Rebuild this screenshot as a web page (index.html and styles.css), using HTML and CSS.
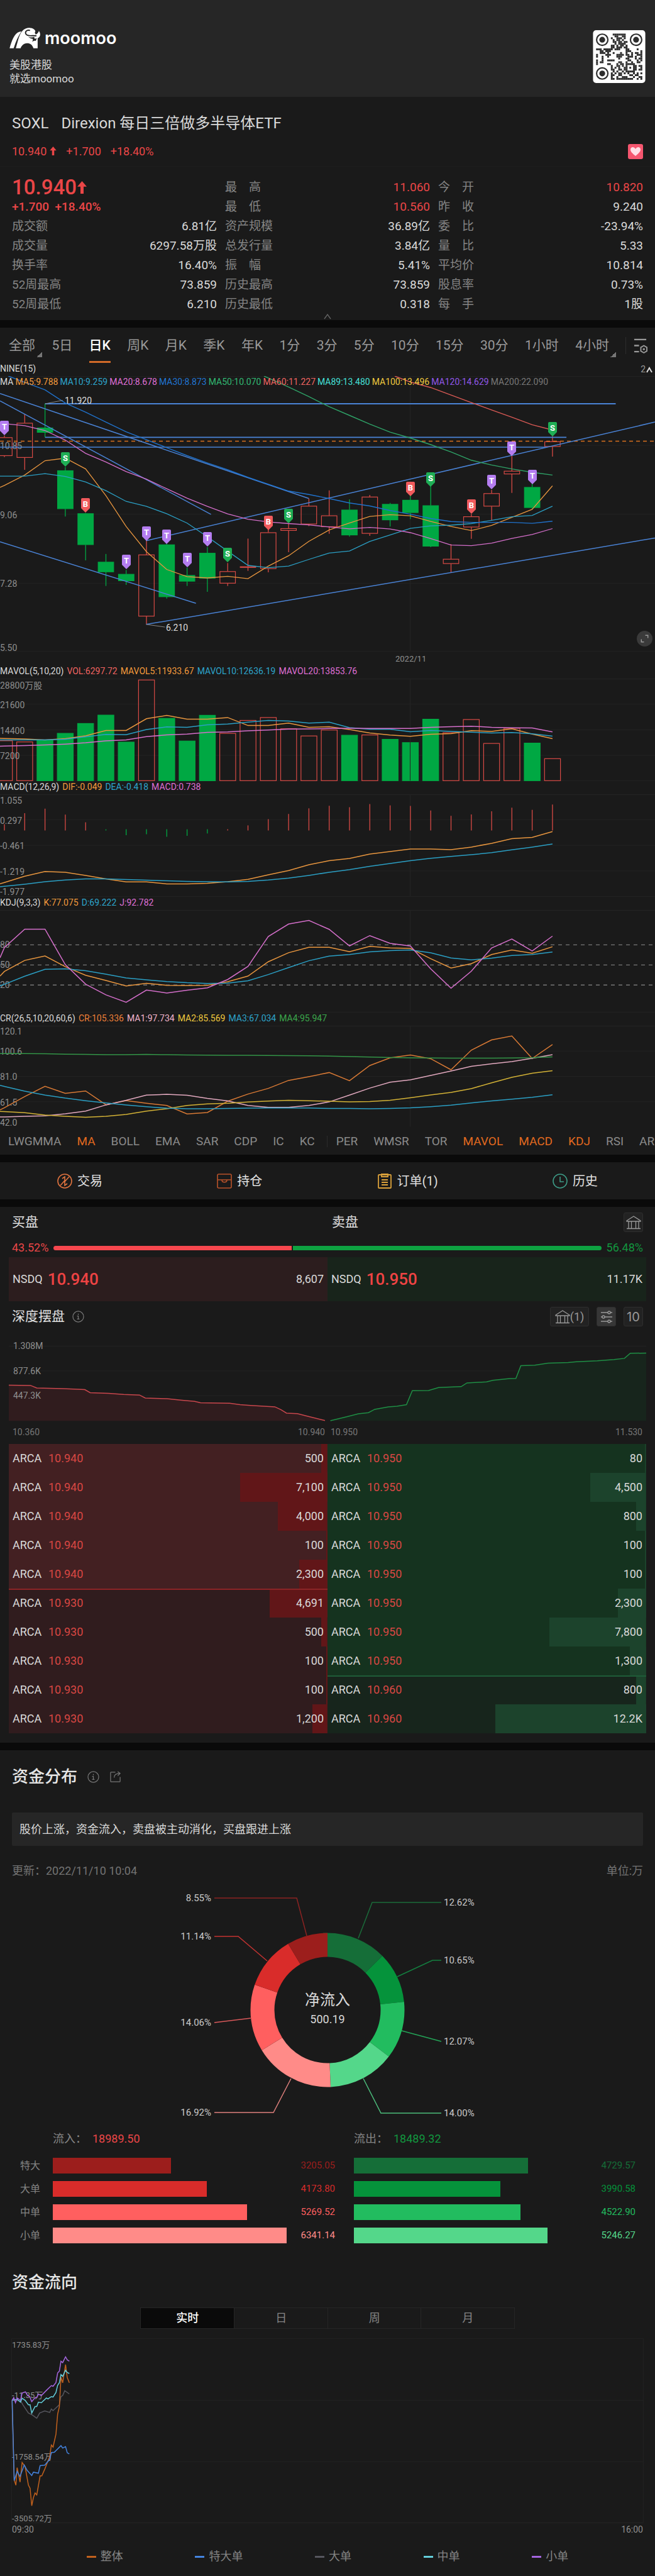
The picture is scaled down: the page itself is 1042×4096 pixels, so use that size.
FILE: index.html
```html
<!DOCTYPE html>
<html lang="zh-CN">
<head>
<meta charset="utf-8">
<meta name="viewport" content="width=device-width, initial-scale=1">
<title>SOXL - moomoo</title>
<link rel="stylesheet" href="styles.css">
</head>
<body>
<header class="brand">
  <div>
    <div class="logo">
      <svg class="bull" viewBox="26 26 186 122" aria-hidden="true">
        <path fill="#fff" d="M27 147C38 108 54 58 86 50L97 48C78 74 64 108 51 147Z"/>
        <path fill="#fff" d="M64 147C80 98 86 28 143 27C165 27 182 40 184 58L180 66C192 62 198 54 200 45C214 62 208 82 193 88V147H168C160 124 146 117 129 118C110 119 98 132 92 147Z"/>
        <path fill="none" stroke="#262626" stroke-width="7" d="M148 42C128 36 116 50 124 64C134 80 160 70 186 74"/>
        <path fill="#262626" d="M136 78C150 86 162 84 172 80L176 92L188 88L182 104C176 102 168 104 160 110C164 102 166 98 164 92C154 92 144 86 136 78ZM182 40L190 60L182 66L176 56Z"/>
      </svg>
      <span class="wordmark">moomoo</span>
    </div>
    <p class="slogan">美股港股<br>就选moomoo</p>
  </div>
  <svg class="qr" id="qr" viewBox="12 12 306 309" role="img" aria-label="QR"></svg>
</header>

<main>
<section class="head">
  <h1>SOXL<span>Direxion 每日三倍做多半导体ETF</span></h1>
  <div class="subline up">
    <span>10.940<svg class="arrow" viewBox="0 0 12 16"><path d="M6 0L12 7H8V16H4V7H0Z"/></svg></span><span>+1.700</span><span>+18.40%</span>
    <button class="heart" aria-label="收藏"><svg viewBox="0 0 24 24"><path fill="#ffdfe6" d="M12 19C7 15 4 12 4 9C4 4 10 4 12 8C14 4 20 4 20 9C20 12 17 15 12 19Z"/></svg></button>
  </div>
</section>

<section class="quote">
  <div class="cols">
    <dl>
      <div class="price up">10.940<svg class="arrow" viewBox="0 0 12 16"><path d="M6 0L12 7H8V16H4V7H0Z"/></svg></div>
      <div class="change up">+1.700&nbsp; +18.40%</div>
      <div><dt>成交额</dt><dd>6.81亿</dd></div>
      <div><dt>成交量</dt><dd>6297.58万股</dd></div>
      <div><dt>换手率</dt><dd>16.40%</dd></div>
      <div><dt>52周最高</dt><dd>73.859</dd></div>
      <div><dt>52周最低</dt><dd>6.210</dd></div>
    </dl>
    <dl>
      <div><dt>最　高</dt><dd class="up">11.060</dd></div>
      <div><dt>最　低</dt><dd class="up">10.560</dd></div>
      <div><dt>资产规模</dt><dd>36.89亿</dd></div>
      <div><dt>总发行量</dt><dd>3.84亿</dd></div>
      <div><dt>振　幅</dt><dd>5.41%</dd></div>
      <div><dt>历史最高</dt><dd>73.859</dd></div>
      <div><dt>历史最低</dt><dd>0.318</dd></div>
    </dl>
    <dl>
      <div><dt>今　开</dt><dd class="up">10.820</dd></div>
      <div><dt>昨　收</dt><dd>9.240</dd></div>
      <div><dt>委　比</dt><dd>-23.94%</dd></div>
      <div><dt>量　比</dt><dd>5.33</dd></div>
      <div><dt>平均价</dt><dd>10.814</dd></div>
      <div><dt>股息率</dt><dd>0.73%</dd></div>
      <div><dt>每　手</dt><dd>1股</dd></div>
    </dl>
  </div>
  <button class="fold" aria-label="收起"><svg viewBox="0 0 12 10"><path d="M1 8L6 1L11 8" fill="none" stroke="#666" stroke-width="1.3"/></svg></button>
</section>

<section class="kline">
  <nav class="periods">
    <div class="list">
      <button class="more">全部</button><button>5日</button><button class="on">日K</button><button>周K</button><button>月K</button><button>季K</button><button>年K</button><button>1分</button><button>3分</button><button>5分</button><button>10分</button><button>15分</button><button>30分</button><button>1小时</button><button class="more">4小时</button>
    </div>
    <button class="setting" aria-label="设置"><svg viewBox="0 0 24 28"><path d="M2 4H22M2 14H10M2 24H10" fill="none" stroke="#999" stroke-width="2.4"/><path d="M18 14L23 17V23L18 26L13 23V17Z" fill="none" stroke="#999" stroke-width="2"/><circle cx="18" cy="20" r="1.8" fill="#999"/></svg></button>
  </nav>
  <div class="legend"><span>NINE(15)</span><span class="count">2<svg viewBox="0 0 12 12"><path d="M2 10L6 3L10 10" fill="none" stroke="#ddd" stroke-width="2"/></svg></span></div>
  <div class="main-chart">
    <svg id="candles" viewBox="0 0 1042 460"></svg>
    <div class="legend tight">
      <span>MA</span><span class="c-or">MA5:9.788</span><span class="c-cy">MA10:9.259</span><span class="c-pk">MA20:8.678</span><span class="c-bl">MA30:8.873</span><span class="c-gr">MA50:10.070</span><span class="c-rd">MA60:11.227</span><span class="c-aq">MA89:13.480</span><span class="c-ye">MA100:13.496</span><span class="c-pu">MA120:14.629</span><span class="c-gy">MA200:22.090</span>
    </div>
    <button class="expand" aria-label="全屏"><svg viewBox="0 0 24 24"><path d="M13 7H17V11M7 13V17H11" fill="none" stroke="#999" stroke-width="1.4"/></svg></button>
  </div>
  <div class="legend"><span>MAVOL(5,10,20)</span><span class="c-rd">VOL:6297.72</span><span class="c-or">MAVOL5:11933.67</span><span class="c-cy">MAVOL10:12636.19</span><span class="c-pk">MAVOL20:13853.76</span></div>
  <svg id="volume" viewBox="0 0 1042 163"></svg>
  <div class="legend"><span>MACD(12,26,9)</span><span class="c-or">DIF:-0.049</span><span class="c-cy">DEA:-0.418</span><span class="c-pk">MACD:0.738</span></div>
  <svg id="macd" viewBox="0 0 1042 163"></svg>
  <div class="legend"><span>KDJ(9,3,3)</span><span class="c-or">K:77.075</span><span class="c-cy">D:69.222</span><span class="c-pk">J:92.782</span></div>
  <svg id="kdj" viewBox="0 0 1042 163"></svg>
  <div class="legend"><span>CR(26,5,10,20,60,6)</span><span class="c-do">CR:105.336</span><span class="c-lp">MA1:97.734</span><span class="c-ye">MA2:85.569</span><span class="c-cy">MA3:67.034</span><span class="c-g2">MA4:95.947</span></div>
  <svg id="cr" viewBox="0 0 1042 163"></svg>
  <nav class="indicators">
    <button>LWGMMA</button><button class="on">MA</button><button>BOLL</button><button>EMA</button><button>SAR</button><button>CDP</button><button>IC</button><button class="last">KC</button><button>PER</button><button>WMSR</button><button>TOR</button><button class="on">MAVOL</button><button class="on">MACD</button><button class="on">KDJ</button><button>RSI</button><button>AREA</button>
  </nav>
</section>

<nav class="actions">
  <a href="#trade"><svg viewBox="0 0 24 24" fill="none" stroke="#e0733f" stroke-width="1.6"><circle cx="12" cy="12" r="11"/><path d="M5 19L13 10M11 14L19 5M8 8L12 5V11M16 16L12 19V13"/></svg>交易</a>
  <a href="#position"><svg viewBox="0 0 24 24" fill="none" stroke="#b9532a" stroke-width="1.6"><rect x="1" y="1" width="22" height="22" rx="2"/><path d="M1 10H23M8 10C8 15 16 15 16 10"/></svg>持仓</a>
  <a href="#orders"><svg viewBox="0 0 24 24" fill="none" stroke="#d9a03a" stroke-width="1.8"><rect x="2" y="2" width="20" height="21" rx="1"/><path d="M7 1H17V5H7ZM7 10H17M7 14H17M7 18H17"/></svg>订单(1)</a>
  <a href="#history"><svg viewBox="0 0 24 24" fill="none" stroke="#3d9a86" stroke-width="1.6"><circle cx="12" cy="12" r="11"/><path d="M12 5V13H18"/></svg>历史</a>
</nav>

<section class="book">
  <div class="row bidask"><h2>买盘</h2><h2>卖盘</h2>
    <button class="tool" aria-label="交易所"><svg class="bank" viewBox="0 0 24 22"><path d="M1 8L12 1L23 8V9H1ZM1 20.500H23M4 9V20M8.500 9V20M15.500 9V20M20 9V20"/></svg></button>
  </div>
  <div class="row ratio"><span class="up">43.52%</span><div class="meter"><i class="buy" style="width:43.52%"></i><i class="sell" style="width:56.48%"></i></div><span class="down">56.48%</span></div>
  <div class="best">
    <div class="bid"><span>NSDQ</span><b>10.940</b><span>8,607</span></div>
    <div class="ask"><span>NSDQ</span><b>10.950</b><span>11.17K</span></div>
  </div>
  <div class="row depth-head"><h2>深度摆盘</h2><svg class="info" viewBox="0 0 20 20"><circle cx="10" cy="10" r="9"/><path d="M8 9H10V14M8 14H12M10 5V7"/></svg>
    <button class="tool wide" aria-label="交易所 (1)"><svg class="bank" viewBox="0 0 24 22"><path d="M1 8L12 1L23 8V9H1ZM1 20.500H23M4 9V20M8.500 9V20M15.500 9V20M20 9V20"/></svg>(1)</button>
    <button class="tool active" aria-label="筛选"><svg viewBox="0 0 20 20" fill="none" stroke="#999" stroke-width="1.4"><path d="M1 3H12M16 3H19M1 10H3M7 10H19M1 17H12M16 17H19"/><circle cx="14" cy="3" r="2"/><circle cx="5" cy="10" r="2"/><circle cx="14" cy="17" r="2"/></svg></button>
    <button class="tool num">10</button>
  </div>
  <svg id="depth" viewBox="0 0 1042 153"></svg>
  <div class="depth-axis"><span>10.360</span><span>10.940</span><span>10.950</span><span>11.530</span></div>
  <div class="levels">
    <table class="bids"><tbody id="bids"></tbody></table>
    <table class="asks"><tbody id="asks"></tbody></table>
  </div>
</section>

<section class="fund">
  <div class="fund-title"><h2>资金分布</h2><svg class="info" viewBox="0 0 20 20"><circle cx="10" cy="10" r="9"/><path d="M8 9H10V14M8 14H12M10 5V7"/></svg><svg class="info" viewBox="0 0 20 20"><path d="M10 2H3Q2 2 2 3V17Q2 18 3 18H17Q18 18 18 17V10M8 11C8 6 12 4 17 4M14 1L18 4L14 8"/></svg></div>
  <p class="note">股价上涨，资金流入，卖盘被主动消化，买盘跟进上涨</p>
  <div class="meta"><span>更新：2022/11/10 10:04</span><span>单位:万</span></div>
  <svg id="donut" viewBox="0 0 1042 400"></svg>
  <div class="flows">
    <div></div><div class="total">流入：<b class="up">18989.50</b></div><div class="total">流出：<b class="down">18489.32</b></div>
  </div>
  <div class="flows bars">
    <span>特大</span><div class="track r1"><i style="width:41.8%"></i><em>3205.05</em></div><div class="track g1"><i style="width:61.9%"></i><em>4729.57</em></div>
    <span>大单</span><div class="track r2"><i style="width:54.5%"></i><em>4173.80</em></div><div class="track g2"><i style="width:52.1%"></i><em>3990.58</em></div>
    <span>中单</span><div class="track r3"><i style="width:68.9%"></i><em>5269.52</em></div><div class="track g3"><i style="width:59.2%"></i><em>4522.90</em></div>
    <span>小单</span><div class="track r4"><i style="width:82.8%"></i><em>6341.14</em></div><div class="track g4"><i style="width:68.8%"></i><em>5246.27</em></div>
  </div>
  <h2 class="trend-title">资金流向</h2>
  <div class="segmented"><button class="on">实时</button><button>日</button><button>周</button><button>月</button></div>
  <svg id="trend" viewBox="0 0 1042 294"></svg>
  <div class="time-axis"><span>09:30</span><span>16:00</span></div>
  <ul class="keys"><li class="k1">整体</li><li class="k2">特大单</li><li class="k3">大单</li><li class="k4">中单</li><li class="k5">小单</li></ul>
</section>
</main>
<script src="charts.js"></script>
</body>
</html>
```
FILE: styles.css
```css
* { box-sizing: border-box; }
body { margin: 0; background: #1a1a1a; color: #d9d9d9; font: 18px/24px Roboto, "Noto Sans CJK SC", sans-serif; }
h1, h2, p, dl, dd, ul { margin: 0; padding: 0; font-weight: 400; }
button { margin: 0; padding: 0; border: 0; background: none; color: inherit; font: inherit; }
svg { display: block; }
main > section > svg, .main-chart > svg { width: 100%; height: auto; }
i, em { font-style: normal; }
.up { color: #ea4647; }
.down { color: #12963f; }

.brand { display: flex; justify-content: space-between; align-items: center; padding: 44px 15px 18px; background: #262626; }
.logo { display: flex; align-items: center; gap: 6px; height: 33px; }
.bull { width: 50px; height: 33px; }
.wordmark { color: #fff; font: 600 27px/33px Inter, sans-serif; }
.slogan { margin-top: 15px; font-size: 17px; line-height: 22px; }
.qr { width: 84px; height: 84px; }

.head { padding: 25px 19px 11px; border-bottom: 1px solid #1e1e1e; }
h1 { font-size: 24px; line-height: 34px; }
h1 span { margin-left: 20px; }
.subline { display: flex; gap: 15px; margin-top: 16px; }
.subline .arrow { display: inline-block; width: 11px; height: 14px; margin-left: 5px; }
.arrow { fill: currentColor; }
.heart { width: 24px; height: 24px; margin-left: auto; border-radius: 3px; background: #f5566f; }

.quote { padding: 17px 19px 0; border-bottom: 12px solid #0a0a0a; }
.cols { display: grid; grid-template-columns: repeat(3, 1fr); gap: 13px; font-size: 19px; }
dl > div { display: flex; justify-content: space-between; height: 31px; line-height: 31px; }
dl > .price { justify-content: flex-start; align-items: center; font-size: 33px; font-weight: 500; }
.price .arrow { width: 15px; height: 20px; margin-left: 1px; }
dl > .change { justify-content: flex-start; font-weight: 500; }
dt { color: #858585; }
.fold { display: block; width: 12px; height: 10px; margin: 0 auto; }

.periods { display: flex; align-items: center; height: 56px; padding: 0 12px 0 14px; color: #999; font-size: 21px; }
.list { display: flex; flex: 1; justify-content: space-between; padding-right: 15px; margin-right: 11px; }
.list button { position: relative; height: 56px; }
.list .on { color: #fff; font-weight: 500; }
.list .on::after { content: ""; position: absolute; left: 0; right: 0; bottom: 0; height: 3px; background: #d26a28; }
.list .more::after { content: ""; position: absolute; right: -11px; bottom: 9px; width: 9px; height: 9px; background: linear-gradient(135deg, transparent 50%, #777 50%); }
.setting { padding-left: 11px; border-left: 1px solid #2c2c2c; }
.setting svg { width: 23px; height: 27px; }

.legend { display: flex; gap: 5px; height: 21px; color: #d9d9d9; font-size: 14px; line-height: 19px; white-space: nowrap; }
.count { display: flex; align-items: center; margin-left: auto; padding-right: 3px; color: #999; }
.count svg { width: 12px; height: 12px; }
.main-chart { position: relative; }
.main-chart .legend { position: absolute; top: 0; left: 0; }
.legend.tight { gap: 3px; }
.expand { position: absolute; right: 4px; bottom: 30px; width: 25px; height: 25px; border-radius: 50%; background: #3a3a3a; }
.c-or { color: #f39a3c; } .c-cy { color: #2da5cc; } .c-pk { color: #df6fd6; } .c-bl { color: #2075d3; }
.c-gr { color: #31b872; } .c-rd { color: #ee6461; } .c-aq { color: #45e0d8; } .c-ye { color: #efc93e; }
.c-pu { color: #9157e8; } .c-gy { color: #777; } .c-do { color: #ec7f38; } .c-lp { color: #f0b4cc; } .c-g2 { color: #3aa64b; }

.axis { fill: #8f8f8f; font-size: 14px; }
.axis.small { font-size: 13px; }
.tag { fill: #ddd; font-size: 14px; }
.pin { fill: #fff; font-size: 13px; font-weight: 700; text-anchor: middle; }
.pct { fill: #c9c9c9; font-size: 15px; }
.pct.end { text-anchor: end; }
.net { fill: #d9d9d9; font-size: 24px; text-anchor: middle; }
.net.sum { font-size: 18px; }

.indicators { display: flex; gap: 25px; padding-left: 13px; overflow: hidden; color: #8a8a8a; font-size: 19px; line-height: 40px; height: 42px; }
.indicators .on { color: #e0691f; }
.indicators .last { padding-right: 20px; margin-right: -11px; background: linear-gradient(#2c2c2c, #2c2c2c) right center / 1px 18px no-repeat; }

.actions { display: flex; justify-content: space-around; align-items: center; height: 83px; border: solid #0a0a0a; border-width: 12px 0; }
.actions a { display: flex; align-items: center; gap: 8px; color: #e0e0e0; font-size: 20px; text-decoration: none; }
.actions svg { width: 24px; height: 24px; }

.book { padding: 9px 0 15px; border-bottom: 12px solid #0a0a0a; }
.row { display: flex; align-items: center; padding: 0 19px; }
.book h2 { font-size: 21px; line-height: 31px; color: #e0e0e0; }
.bidask h2:first-child { width: calc(50% + 7px); }
.tool { display: flex; align-items: center; justify-content: center; width: 31px; height: 31px; border: 1px solid #2e2e2e; border-radius: 3px; background: #222; color: #999; }
.bidask .tool { margin-left: auto; }
.tool svg { width: 20px; height: 20px; }
.tool .bank { width: 24px; height: 22px; fill: none; stroke: #999; stroke-width: 1.3; }
.tool.wide { width: 62px; margin-left: auto; }
.tool.active { margin: 0 12px; background: #363636; }
.tool.num { font: 20px/24px Inter, sans-serif; }
.ratio { gap: 8px; margin-top: 13px; }
.meter { display: flex; flex: 1; gap: 2px; height: 7px; border-radius: 4px; overflow: hidden; }
.buy { background: #f7474e; }
.sell { background: #0ea241; }
.best { display: grid; grid-template-columns: 1fr 1fr; margin: 3px 14px 0; }
.best div { display: flex; align-items: center; height: 70px; padding: 0 6px; }
.best b { flex: 1; margin-left: 8px; color: #ee4343; font-size: 26px; font-weight: 500; }
.bid { background: #2c1d1e; }
.ask { background: #18241b; }
.depth-head { margin-top: 9px; }
.info { width: 19px; height: 19px; margin-left: 12px; fill: none; stroke: #777; stroke-width: 1.3; }
.depth-axis { display: grid; grid-template-columns: auto 1fr 1fr auto; margin: 5px 20px 9px; color: #777; font-size: 14px; line-height: 20px; }
.depth-axis span:nth-child(2) { text-align: right; padding-right: 4px; }
.depth-axis span:nth-child(3) { padding-left: 5px; }
.levels { display: grid; grid-template-columns: 1fr 1fr; margin: 0 14px; }
table { width: 100%; border-collapse: collapse; }
tr { height: 46px; background: linear-gradient(var(--bar), var(--bar)) right / var(--w) 100% no-repeat var(--row); }
td { padding: 0 6px; }
td:first-child { width: 57px; padding-right: 0; }
td:nth-child(2) { color: #d94743; }
td:last-child { text-align: right; }
.bids { --bar: #611618; --row: #432022; }
.bids .far { --row: #301c1e; }
.asks { --bar: #1c432c; --row: #15331f; }
.asks .far { --row: #17251c; }
.bids .edge td { box-shadow: inset 0 2px #8c2426; }
.asks .edge td { box-shadow: inset 0 2px #1f5c38; }

.fund { padding: 25px 0 19px; }
.fund-title { display: flex; align-items: center; padding: 0 19px; }
.fund-title .info { margin-left: 16px; }
.fund h2 { color: #e6e6e6; font-size: 26px; font-weight: 500; line-height: 34px; }
.note { margin: 40px 19px 0; padding: 0 12px; background: #262626; border-radius: 2px; line-height: 53px; }
.meta { display: flex; justify-content: space-between; margin: 28px 19px 0; color: #737373; }
.flows { display: grid; grid-template-columns: 52px 479fr 448fr; padding: 0 31px 0 32px; margin-top: 2px; }
.flows > :nth-child(3n+2) { margin-right: 30px; }
.total { color: #858585; }
.total b { margin-left: 9px; font-weight: 400; }
.bars { row-gap: 12px; margin-top: 18px; color: #858585; font-size: 16px; line-height: 25px; }
.track { display: flex; justify-content: space-between; height: 25px; font-size: 15px; }
.track i { background: currentColor; }
.r1 { color: #9c1e1c; } .r2 { color: #d92c2a; } .r3 { color: #ff5f5f; } .r4 { color: #ff8b88; }
.g1 { color: #156e38; } .g2 { color: #05933b; } .g3 { color: #22bc5f; } .g4 { color: #54d78a; }
.fund .trend-title { margin: 45px 19px 0; }
.segmented { display: grid; grid-template-columns: repeat(4, 1fr); width: 57.2%; height: 34px; margin: 23px auto 15px; border: 1px solid #262626; color: #858585; }
.segmented button + button { border-left: 1px solid #262626; }
.segmented .on { background: #0a0a0a; color: #fff; font-weight: 500; }
.time-axis { display: flex; justify-content: space-between; padding: 0 19px; color: #8f8f8f; font-size: 14px; line-height: 20px; }
.keys { display: flex; justify-content: center; gap: 11%; margin-top: 21px; color: #858585; list-style: none; }
.keys li { display: flex; align-items: center; gap: 7px; }
.keys li::before { content: ""; width: 15px; height: 3px; background: var(--c); }
.k1 { --c: #c2611d; } .k2 { --c: #4484e0; } .k3 { --c: #56565e; } .k4 { --c: #64cfdc; } .k5 { --c: #a566e0; }
```
FILE: charts.js
```js
// Chart grid: horizontal units shared by all panels, one candle every 48.6 units.
const UX = 0.6645;
const cx = i => 10.5 + 48.6 * i;
const $ = id => document.getElementById(id);

function panel(id, uy, top) {
  const Y = y => (y - top) * uy;
  let out = '';
  const p = {
    line(pts, color, w = 1.3, extra = '') {
      out += `<polyline fill="none" stroke="${color}" stroke-width="${w}" ${extra} points="${pts.map(([x, y]) => (x * UX).toFixed(1) + ',' + Y(y).toFixed(1)).join(' ')}"/>`;
    },
    series(ys, color, w = 1.3, first = 0, lead = []) {
      const pts = ys.map((y, i) => [cx(i + first), y]);
      if (!first && !lead.length) lead = [[0, ys[0] - (ys[1] - ys[0]) * 0.2]];
      p.line([...lead, ...pts], color, w);
    },
    rect(x, y1, w, y2, fill, stroke) {
      out += `<rect x="${(x * UX).toFixed(1)}" y="${Y(y1).toFixed(1)}" width="${(w * UX).toFixed(1)}" height="${Math.max(1, Y(y2) - Y(y1)).toFixed(1)}" fill="${fill}" stroke="${stroke}" stroke-width="1.2"/>`;
    },
    area(pts, fill) {
      out += `<polygon fill="${fill}" points="${pts.map(([x, y]) => (x * UX).toFixed(1) + ',' + Y(y).toFixed(1)).join(' ')}"/>`;
    },
    grid(ys, x1 = 0, x2 = 1568) { ys.forEach(y => p.line([[x1, y], [x2, y]], '#242424', 1)); },
    text(x, y, s, cls = 'axis') { out += `<text class="${cls}" x="${Math.round(x * UX)}" y="${Math.round(Y(y) + 5)}">${s}</text>`; },
    raw(s) { out += s; },
    Y,
    done() { $(id).innerHTML = out; }
  };
  return p;
}

const RED = '#d84a45', GREEN = '#00a843', OR = '#e8963f', CY = '#2b9fc4', PK = '#d56fcb', DRAW = '#4a83d6';

// ---- candles
const k = panel('candles', 0.3635, 302);
k.grid([303, 605, 906, 1208, 1506]);
k.line([[982, 303], [982, 1506]], '#242424', 1);
[['10.85', 608], ['9.06', 910], ['7.28', 1210], ['5.50', 1490]].forEach(([s, y]) => k.text(0, y, s));
[['r',570,651,562,656],['r',507,659,468,712],['g',528,549,422,570],['g',715,883,700,916],['g',903,1040,900,1108],['g',1115,1159,1080,1220],['g',1168,1198,1150,1215],['r',1083,1353,1020,1388],['g',1039,1268,1035,1275],['g',1173,1200,1140,1220],['g',1076,1187,1050,1246],['r',1156,1209,1120,1220],['r',1135,1137,1013,1154],['r',986,1145,972,1160],['r',968,978,948,1072],['r',870,950,837,958],['r',912,962,802,992],['g',887,998,841,1004],['r',830,991,822,1001],['g',862,932,857,960],['g',844,900,825,927],['g',868,1047,780,1050],['r',1102,1123,1037,1162],['r',916,963,905,1014],['r',815,872,800,935],['r',717,731,648,813],['g',788,878,773,884],['r',588,611,565,654]].forEach(([t, a, b, h, l], i) => {
  const c = t === 'r' ? RED : GREEN;
  k.line([[cx(i), h], [cx(i), a]], c, 1.3);
  k.line([[cx(i), b], [cx(i), l]], c, 1.3);
  k.rect(cx(i) - 18.5, a + 1, 37, b - 1, t === 'r' ? 'none' : GREEN, c);
});
k.line([[0, 587], [1568, 587]], '#d9701e', 1.5, 'stroke-dasharray="6 5"');
[[[108,423],[1474,423],2],[[108,570],[1356,570],1.6],[[0,613],[1310,613],1.6],[[0,378],[739,837],1.5],[[0,410],[505,907],1.5],[[0,1027],[469,1296],1.5],[[350,1022],[1568,503],1.5],[[350,1388],[1568,1010],1.5]].forEach(([a, b, w]) => k.line([a, b], DRAW, w));
k.series([780,735,672,661,708,825,960,1070,1148,1179,1185,1178,1188,1133,1088,1025,975,945,916,908,913,938,960,978,955,920,885,782], OR);
k.series([740,740,729,741,765,803,850,872,904,945,1005,1068,1130,1140,1133,1104,1076,1067,1025,997,968,957,954,947,933,917,912,871], CY);
k.series([510,519,540,582,640,678,720,753,795,836,872,905,928,940,947,953,962,970,964,971,987,1013,1041,1044,1033,1012,995,969], PK);
k.series([362,420,460,503,546,580,615,650,682,712,745,775,805,820,838,857,870,890,906,925,938,942,942,942,946,937], '#2072cc', 1.4, 2, [[20, 302], [60, 330]]);
k.series([350,392,436,474,512,547,573,602,634,670,691,708,723,735], '#2fa368', 1.4, 14, [[632, 302]]);
k.series([328,352,385,418,450,482,515,538], '#d95a55', 1.4, 20, [[945, 302]]);
k.line([[108, 423], [150, 408]], '#888', 1);
k.text(155, 408, '11.920', 'tag');
k.line([[350, 1388], [395, 1400]], '#888', 1);
k.text(397, 1402, '6.210', 'tag');
k.text(947, 1537, '2022/11', 'axis small');
[[0,'T',498],[3,'S',634],[4,'B',836],[6,'T',1083],[7,'T',959],[8,'T',974],[9,'T',1075],[10,'T',984],[11,'S',1053],[13,'B',912],[14,'S',883],[20,'B',763],[21,'S',722],[23,'B',841],[24,'T',734],[25,'T',588],[26,'T',712],[27,'S',504]].forEach(([i, s, y]) => {
  const x = Math.round(cx(i) * UX), t = Math.round(k.Y(y));
  k.raw(`<path fill="${{T:'#b47df0',S:'#1fae55',B:'#f05a5c'}[s]}" d="M${x - 7} ${t + 2}q0 -2 2 -2h10q2 0 2 2v14l-7 7l-7 -7z"/><text class="pin" x="${x}" y="${t + 14}">${s}</text>`);
});
k.done();

// ---- volume
const v = panel('volume', 0.27143, 135);
v.grid([137, 285, 435, 585, 733]);
[['r',497],['r',504],['g',495],['g',454],['g',396],['g',347],['g',505],['r',141],['g',366],['g',499],['g',348],['r',454],['r',378],['r',361],['r',427],['r',469],['r',434],['g',465],['r',463],['g',489],['g',508],['g',371],['r',450],['r',373],['r',513],['r',424],['g',511],['r',602]].forEach(([t, y], i) => {
  v.rect(cx(i) - 19, y + 2, 38, 733, t === 'r' ? 'none' : GREEN, t === 'r' ? RED : GREEN);
});
v.line([[982, 137], [982, 733]], '#242424', 1);
[['28800万股', 175], ['21600', 288], ['14400', 440], ['7200', 587]].forEach(([s, y]) => v.text(0, y, s));
v.series([486,489,494,487,470,439,439,370,351,373,373,363,410,410,396,420,417,433,454,466,473,461,457,440,445,429,460,487], OR, 1.5);
v.series([494,494,494,490,476,462,464,433,418,420,406,401,390,380,384,396,390,422,432,432,446,439,445,449,454,451,458,472], CY, 1.5);
v.series([530,527,524,519,511,500,494,475,465,460,450,447,441,436,431,430,427,426,427,427,427,420,417,414,420,423,424,447], PK, 1.5);
v.done();

// ---- MACD
const m = panel('macd', 0.27143, 813);
m.grid([815, 962, 1112, 1262, 1411]);
m.line([[982, 815], [982, 1411]], '#242424', 1);
[['1.055', 848], ['0.297', 967], ['-0.461', 1115], ['-1.219', 1265], ['-1.977', 1383]].forEach(([s, y]) => m.text(0, y, s));
[988,923,897,932,977,-1025,-1053,-1047,-1062,-1056,-1042,1017,995,958,928,895,880,889,870,878,881,908,939,931,912,891,904,873].forEach((y, i) => {
  m.line([[cx(i), Math.abs(y)], [cx(i), y < 0 ? 1018 : 1025]], y < 0 ? GREEN : RED, 1.3);
});
m.series([1330,1293,1265,1270,1288,1308,1326,1326,1338,1338,1334,1325,1311,1285,1260,1226,1202,1189,1163,1148,1133,1133,1137,1122,1100,1073,1065,1031], OR, 1.5);
m.series([1352,1340,1325,1315,1309,1309,1312,1316,1320,1323,1325,1326,1323,1315,1304,1288,1270,1254,1235,1218,1202,1188,1177,1167,1155,1138,1122,1104], CY, 1.5);
m.done();

// ---- KDJ
const d = panel('kdj', 0.27143, 50);
d.grid([52, 648]);
d.line([[982, 52], [982, 648]], '#242424', 1);
[['80', 254], ['50', 372], ['20', 489]].forEach(([s, y]) => { d.text(0, y, s); d.line([[0, y], [1568, y]], '#777', 1.4, 'stroke-dasharray="6 6"'); });
d.series([410,345,319,382,432,463,495,479,491,492,491,470,437,353,300,268,268,294,263,272,275,335,390,364,311,284,303,265], OR, 1.5, 0, [[0, 437]]);
d.series([485,438,397,394,405,426,448,459,469,476,480,478,464,428,387,347,320,311,295,288,284,300,331,342,332,316,311,296], CY, 1.5);
d.series([270,162,162,370,484,547,590,519,536,520,506,457,380,205,132,111,163,260,200,245,261,395,508,408,272,220,290,203], PK, 1.5, 0, [[0, 330]]);
d.done();

// ---- CR
const c = panel('cr', 0.27143, 730);
c.grid([732, 878, 1027, 1175]);
c.line([[982, 732], [982, 1322]], '#242424', 1);
[['120.1', 762], ['100.6', 880], ['81.0', 1030], ['61.5', 1180], ['42.0', 1298]].forEach(([s, y]) => c.text(0, y, s));
c.series([1210,1145,1085,1126,1112,1193,1168,1184,1197,1247,1238,1172,1130,1097,1050,1028,1004,1052,963,918,901,923,988,873,813,790,922,840], '#d97a35', 1.5);
c.series([1264,1261,1258,1246,1230,1194,1167,1136,1132,1137,1155,1170,1197,1208,1208,1197,1176,1136,1095,1061,1047,1021,995,968,953,940,921,899], '#e2a9bf', 1.5);
c.series([1233,1239,1253,1261,1266,1260,1249,1230,1216,1197,1188,1184,1177,1171,1167,1169,1172,1176,1174,1167,1152,1135,1121,1098,1064,1032,1008,993], '#d3b236', 1.5);
c.series([1085,1113,1136,1154,1169,1182,1194,1204,1213,1216,1216,1215,1213,1212,1212,1212,1215,1215,1216,1215,1211,1204,1195,1182,1170,1160,1149,1134], CY, 1.5);
c.series([893,893,894,897,898,899,899,898,900,901,902,903,903,904,905,906,908,911,913,916,918,919,920,920,920,919,917,912], '#339447', 1.5);
c.done();

// ---- market depth
const q = panel('depth', 0.3116, 914.6);
q.grid([1015, 1142, 1268], 21, 1547);
const bid = [[21,1215],[73,1216],[88,1229],[150,1232],[203,1237],[216,1253],[260,1256],[296,1262],[334,1265],[348,1280],[400,1284],[432,1291],[466,1297],[480,1305],[550,1307],[575,1314],[600,1318],[658,1325],[673,1340],[686,1357],[712,1360],[740,1375],[778,1395]];
const ask = [[791,1396],[830,1376],[858,1361],[882,1355],[897,1338],[930,1325],[950,1322],[973,1314],[987,1243],[1026,1242],[1050,1227],[1104,1222],[1118,1203],[1165,1198],[1180,1190],[1220,1181],[1235,1180],[1247,1115],[1280,1113],[1312,1102],[1360,1099],[1380,1095],[1430,1090],[1470,1084],[1495,1078],[1509,1052],[1547,1051]];
q.area([[21, 1397], ...bid, [778, 1397]], '#301c1e');
q.area([...ask, [1547, 1397]], '#17251c');
q.line(bid, '#c9474d', 1.5);
q.line(ask, '#1f8f45', 1.5);
[['1.308M', 1015], ['877.6K', 1142], ['447.3K', 1268]].forEach(([s, y]) => q.text(31, y, s));
q.done();

// ---- order book levels: price, size, bar width in percent
const rows = (list, venue, edge) => list.map(([p, s, w], i) =>
  `<tr class="${i >= edge ? 'far' : ''}${i === edge ? ' edge' : ''}" style="--w:${w}%"><td>${venue}</td><td>${p}</td><td>${s}</td></tr>`).join('');
$('bids').innerHTML = rows([['10.940','500',1.9],['10.940','7,100',27.5],['10.940','4,000',15.5],['10.940','100',.4],['10.940','2,300',8.9],['10.930','4,691',18.2],['10.930','500',1.9],['10.930','100',.4],['10.930','100',.4],['10.930','1,200',4.7]], 'ARCA', 5);
$('asks').innerHTML = rows([['10.950','80',.3],['10.950','4,500',17.5],['10.950','800',3.1],['10.950','100',.4],['10.950','100',.4],['10.950','2,300',8.9],['10.950','7,800',30.3],['10.950','1,300',5.1],['10.960','800',3.1],['10.960','12.2K',47.4]], 'ARCA', 8);

// ---- fund distribution ring
let at = 0, ring = '';
[[12.62,'#156e38'],[10.65,'#05933b'],[12.07,'#22bc5f'],[14,'#54d78a'],[16.92,'#ff8b88'],[14.06,'#ff5f5f'],[11.14,'#d92c2a'],[8.54,'#9c1e1c']].forEach(([n, col]) => {
  ring += `<circle cx="521" cy="209" r="103.500" fill="none" stroke="${col}" stroke-width="38" pathLength="100" stroke-dasharray="${n} ${100 - n}" stroke-dashoffset="${-at}" transform="rotate(-90 521 209)"/>`;
  at += n;
});
[['8.55%','341,31 472,31 488,91','#8c2322',336,31],['11.14%','341,92 379,92 425,131','#c43331',336,92],['14.06%','341,229 399,222','#d9585a',336,229],['16.92%','341,372 435,372 463,318','#dd7f7c',336,372],['12.62%','702,38 592,38 570,95','#1b6b3a',706,38],['10.65%','702,130 688,130 632,156','#148040',706,130],['12.07%','702,259 639,242','#24a558',706,259],['14.00%','702,373 606,373 578,318','#4cbd7b',706,373]].forEach(([s, pts, col, x, y]) => {
  ring += `<polyline fill="none" stroke="${col}" stroke-width="1.5" points="${pts}"/><text class="pct${x < 500 ? ' end' : ''}" x="${x}" y="${y + 5}">${s}</text>`;
});
$('donut').innerHTML = ring + '<text class="net" x="521" y="201">净流入</text><text class="net sum" x="521" y="230">500.19</text>';

// ---- fund flow trend
const f = panel('trend', 0.3276, 412);
f.grid([413, 713, 1011, 1308], 28, 1540);
f.line([[28, 413], [28, 1308]], '#242424', 1);
f.line([[1540, 413], [1540, 1308]], '#242424', 1);
[['1735.83万', 443], ['-11.35万', 686], ['-1758.54万', 986], ['-3505.72万', 1285]].forEach(([s, y]) => f.text(28, y, s, 'axis small'));
f.line([[29,713],[49,715],[55,735],[68,775],[76,783],[88,800],[95,775],[107,765],[119,772],[123,755],[127,763],[134,750],[142,735],[146,695],[150,690],[155,667],[166,682]], '#56565e', 1.5);
f.line([[29,713],[34,1100],[38,1125],[41,1040],[48,1110],[53,1015],[60,1035],[68,1125],[72,1140],[76,1225],[80,1185],[84,1163],[88,1172],[96,1080],[100,1080],[107,1048],[119,985],[123,930],[127,940],[134,878],[138,780],[142,745],[146,600],[150,628],[157,540],[161,603],[166,628]], '#c2611d', 1.5);
f.line([[29,713],[34,1103],[41,1058],[48,1083],[58,1027],[65,1053],[76,1078],[80,1062],[92,1067],[96,1030],[107,1028],[119,1000],[123,967],[130,965],[146,933],[150,945],[157,938],[161,968],[166,973]], '#4484e0', 1.5);
f.line([[29,713],[41,708],[49,722],[53,703],[60,713],[68,735],[72,735],[76,775],[84,743],[88,743],[92,722],[99,725],[111,702],[115,706],[123,695],[127,697],[134,675],[138,640],[142,628],[146,588],[150,597],[157,567],[161,578],[166,583]], '#64cfdc', 1.5);
f.line([[29,713],[33,700],[37,725],[41,702],[49,713],[53,678],[61,672],[66,690],[71,695],[76,720],[84,700],[88,700],[92,683],[99,690],[111,665],[123,642],[127,645],[134,627],[138,580],[142,572],[146,523],[150,530],[157,502],[161,517],[166,523]], '#a566e0', 1.5);
f.done();

// ---- QR code: dark modules per row, three round finders
const mods = [[9,10,11,12,13,14,15],[10,11,14,15],[8,11,12,13,15],[9,11,12,14],[9,10,12,13,15,16],[10,12,13,14,15],[8,9,11,13,14,16],[8,9,11,12,13,15,16],[0,1,2,4,5,6,7,8,10,11,12,16,17,22],[2,3,5,6,7,16,17,18,24],[2,3,4,6,9,13,16,19,21,22,24],[0,5,6,7,11,12,13,14,16,17,19,22,23,24],[0,3,6,11,12,13,17,18,19,21,24],[3,12,16,17,21,23,24],[0,3,6,7,8,9,17,18,22,24],[0,2,3,12,13,16,19,22,23],[0,6,7,11,13,14,16,17,18,19,20],[8,11,12,14,16,20,21,23,24],[8,10,12,15,16,18,20,21,24],[8,9,12,13,15,16,20,21,23,24],[9,11,14,16,17,18,19,20],[8,10,12,13,15,17,20,22,24],[8,9,12,13,18,19,21,22],[8,11,14,15,16,20,23,24],[8,9,11,12,13,14,15,16,17,18,19,22,24]];
let qr = '<rect x="12" y="12" width="306" height="309" rx="18" fill="#fff"/>';
mods.forEach((r, y) => r.forEach(x => { qr += `<rect x="${30 + x * 10.8}" y="${32 + y * 10.8}" width="11" height="11" fill="#2c2c2c"/>`; }));
[[66, 68], [264, 68], [66, 265]].forEach(([x, y]) => { qr += `<circle cx="${x}" cy="${y}" r="33" fill="none" stroke="#2c2c2c" stroke-width="8"/><circle cx="${x}" cy="${y}" r="17" fill="#2c2c2c"/>`; });
$('qr').innerHTML = qr;
```
